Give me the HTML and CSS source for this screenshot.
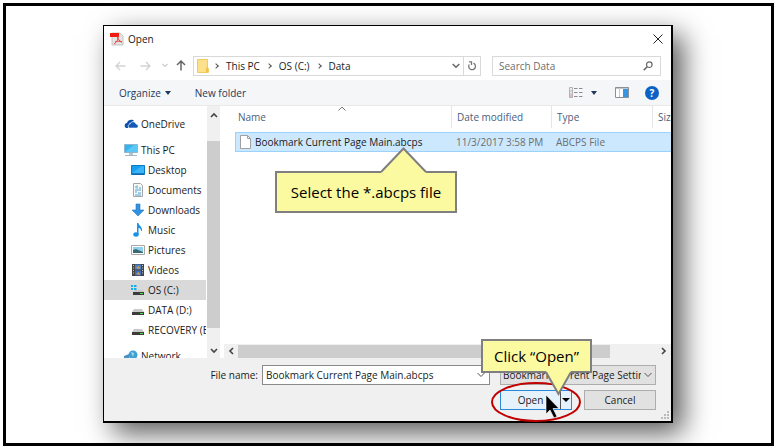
FILE: index.html
```html
<!DOCTYPE html>
<html lang="en">
<head>
    <meta charset="UTF-8">
    <meta name="viewport" content="width=device-width, initial-scale=1.0">
    <title>Open</title>
    <link rel="stylesheet" href="styles.css">
</head>
<body>
    <main class="slide">
        <div class="dialog">

            <header class="title-bar">
                <svg class="pdf-icon" width="14" height="14" viewBox="0 0 14 14">
                    <path d="M2 1h8l3 3v9H2z" fill="#e4e4e4" stroke="#c4c4c4"/>
                    <path d="M0 1h9v4H0z" fill="#ee1c0c"/>
                    <path d="M7 4c1 3 2 5 5 6M8 5c0 3-1 5-4 7M5 10c2-1 4-1 7 0" fill="none" stroke="#e8473c"/>
                </svg>
                <span class="title">Open</span>
                <button class="close" aria-label="Close">
                    <svg width="10" height="10" viewBox="0 0 10 10"><path d="M.5.5l9 9M9.500.5l-9 9" stroke="#222" stroke-width="1"/></svg>
                </button>
            </header>

            <nav class="address-row">
                <button class="nav-button" aria-label="Back">
                    <svg width="11" height="10" viewBox="0 0 11 10"><path d="M10.500 5H1M5 1L1 5l4 4" fill="none" stroke="#d2d2d2" stroke-width="1.300"/></svg>
                </button>
                <button class="nav-button" aria-label="Forward">
                    <svg width="11" height="10" viewBox="0 0 11 10"><path d="M.5 5H10M6 1l4 4-4 4" fill="none" stroke="#d2d2d2" stroke-width="1.300"/></svg>
                </button>
                <button class="nav-button small" aria-label="Recent locations">
                    <svg width="6" height="5" viewBox="0 0 6 5"><path d="M.5 1L3 3.500 5.500 1" fill="none" stroke="#ccc" stroke-width="1.200"/></svg>
                </button>
                <button class="nav-button up" aria-label="Up">
                    <svg width="10" height="11" viewBox="0 0 10 11"><path d="M5 10.500V1M1 5l4-4 4 4" fill="none" stroke="#666" stroke-width="1.500"/></svg>
                </button>
                <div class="path">
                    <svg class="folder" width="12" height="14" viewBox="0 0 12 14">
                        <path d="M.5.5h10v8l1 1v4H.5z" fill="#fde08a" stroke="#f0cb62"/>
                        <path d="M9 9l2-1v5H9z" fill="#efc04c"/>
                    </svg>
                    <span class="crumb-arrow"></span>
                    <a href="#">This PC</a>
                    <span class="crumb-arrow"></span>
                    <a href="#">OS (C:)</a>
                    <span class="crumb-arrow"></span>
                    <a href="#">Data</a>
                    <button class="path-drop" aria-label="Previous locations">
                        <svg width="8" height="6" viewBox="0 0 8 6"><path d="M.7 1L4 4.300 7.300 1" fill="none" stroke="#666" stroke-width="1.500"/></svg>
                    </button>
                    <button class="refresh" aria-label="Refresh">
                        <svg width="10" height="10" viewBox="0 0 10 10"><path d="M6.500 2.200A3.400 3.400 0 1 1 2.200 3.500M2 .8h2.500V4" fill="none" stroke="#777" stroke-width="1.300"/></svg>
                    </button>
                </div>
                <div class="search">
                    <input type="text" placeholder="Search Data" aria-label="Search Data">
                    <svg width="10" height="10" viewBox="0 0 10 10"><circle cx="6.300" cy="3.700" r="2.800" fill="none" stroke="#666" stroke-width="1.200"/><path d="M4.200 5.800L.7 9.300" stroke="#666" stroke-width="1.600"/></svg>
                </div>
            </nav>

            <div class="toolbar">
                <button class="tool">Organize <span class="down"></span></button>
                <button class="tool">New folder</button>
                <button class="view" aria-label="Change your view">
                    <svg width="14" height="11" viewBox="0 0 14 11">
                        <path d="M.5.5h3v10h-3zM.5 4h3M.5 7h3" fill="#eee" stroke="#b3b3b3"/>
                        <path d="M1 8h2v2H1z" fill="#f2b4ae"/>
                        <path d="M5 1.500h3.500M10 1.500h3.500M5 5.500h3.500M10 5.500h3.500M5 9.500h3.500M10 9.500h3.500" stroke="#8a8f96"/>
                    </svg>
                    <span class="down"></span>
                </button>
                <button class="preview" aria-label="Show the preview pane">
                    <svg width="14" height="11" viewBox="0 0 14 11">
                        <path d="M.5.5h13v10H.5z" fill="#fff" stroke="#8a8f96"/>
                        <path d="M.5 1h13" stroke="#8a8f96"/><path d="M4.500 1v9" stroke="#ccc"/>
                        <path d="M8 2h5v8H8z" fill="#3597e4"/>
                    </svg>
                </button>
                <button class="help" aria-label="Get help">?</button>
            </div>

            <div class="content">
                <div class="sidebar">
                    <ul class="tree">
                        <li class="root">
                            <svg width="14" height="14" viewBox="0 0 14 14"><path d="M1 10C0 7 2 6 3 6c1-4 6-4 7-2L6 6 4 9v2H2z" fill="#0b4fae"/><path d="M5 11C3 9 5 7 6 7c1-3 5-3 6 0 2 0 3 3 1 4z" fill="#1458b8" stroke="#fff" stroke-width=".6"/></svg>
                            OneDrive
                        </li>
                        <li class="root">
                            <svg width="14" height="14" viewBox="0 0 14 14"><path d="M.5 1.500h13v8H.5z" fill="#35b4ee" stroke="#8fb6cc"/><path d="M1 9l9-7h3v7z" fill="#5cc8f5"/><path d="M5 10h4v2H5z" fill="#b8c4cc"/><path d="M1 12.500h12" stroke="#a5b8c4"/></svg>
                            This PC
                        </li>
                        <li>
                            <svg width="14" height="14" viewBox="0 0 14 14"><path d="M.5 2.500h13v9H.5z" fill="#18a0f0" stroke="#0a7bc8"/><path d="M1 10l10-7h2v7z" fill="#3cb4f8"/><path d="M1 11h12" stroke="#0b5d9c"/></svg>
                            Desktop
                        </li>
                        <li>
                            <svg width="14" height="14" viewBox="0 0 14 14"><path d="M2.500.5h7l2 2v11h-9z" fill="#f7f7f7" stroke="#a5a5a5"/><path d="M4 4h3M8 5h2M4 7h6M4 9h2M7 10h3M4 12h6" stroke="#4aa3d6"/><path d="M6 2v4" stroke="#7cc"/></svg>
                            Documents
                        </li>
                        <li>
                            <svg width="14" height="14" viewBox="0 0 14 14"><path d="M5 1h4v6h4l-6 6-6-6h4z" fill="#3292e0" stroke="#2178c2" stroke-width=".6"/></svg>
                            Downloads
                        </li>
                        <li>
                            <svg width="14" height="14" viewBox="0 0 14 14"><path d="M6 0h1.500c0 3 4 3 3.500 8h-1c0-2-1-3-2.500-3v6.500H6z" fill="#1593e8"/><ellipse cx="5" cy="11.500" rx="2.700" ry="2.200" fill="#1593e8"/></svg>
                            Music
                        </li>
                        <li>
                            <svg width="14" height="14" viewBox="0 0 14 14"><path d="M.5 2.500h13v9H.5z" fill="#fff" stroke="#a8a8a8"/><path d="M2 4h10v6H2z" fill="#8fd0f0"/><path d="M2 7l3-1 7 3v1H2z" fill="#386b70"/></svg>
                            Pictures
                        </li>
                        <li>
                            <svg width="14" height="14" viewBox="0 0 14 14"><path d="M1 1h12v12H1z" fill="#444"/><path d="M4 1.500h6v5H4z" fill="#4a83d0"/><path d="M4 7.500h6v5H4z" fill="#3f6fc0"/><path d="M5 5l3-2 1 3zM5 11l3-2 1 3z" fill="#d9a23c"/><path d="M2.500 2v10M11.500 2v10" stroke="#ccc" stroke-dasharray="1 1.500"/></svg>
                            Videos
                        </li>
                        <li class="selected">
                            <svg width="14" height="14" viewBox="0 0 14 14"><path d="M0 2h2v2H0zM3 2h2.500v2H3zM0 5h2v2H0zM3 5h2.500v2H3z" fill="#17aee8"/><path d="M4 7h8l1 2H2z" fill="#c9c9c9"/><path d="M2 9h11v3H2z" fill="#3c3c3c"/><path d="M9 10.500h3" stroke="#4fdc4f"/></svg>
                            OS (C:)
                        </li>
                        <li>
                            <svg width="14" height="14" viewBox="0 0 14 14"><path d="M3 6h8l2 3H1z" fill="#c9c9c9"/><path d="M1 9h12v3H1z" fill="#3c3c3c"/><path d="M9 10.500h3" stroke="#4fdc4f"/></svg>
                            DATA (D:)
                        </li>
                        <li>
                            <svg width="14" height="14" viewBox="0 0 14 14"><path d="M3 6h8l2 3H1z" fill="#c9c9c9"/><path d="M1 9h12v3H1z" fill="#3c3c3c"/><path d="M9 10.500h3" stroke="#4fdc4f"/></svg>
                            RECOVERY (E:)
                        </li>
                        <li class="root">
                            <svg width="14" height="14" viewBox="0 0 14 14"><circle cx="9" cy="6" r="4.500" fill="#3fa0d4"/><path d="M0 7l5-2v6H0z" fill="#4a90c0"/><path d="M7 3l3 1-1 4z" fill="#a8daf0"/></svg>
                            Network
                        </li>
                    </ul>
                    <div class="v-scroll">
                        <svg width="8" height="6" viewBox="0 0 8 6"><path d="M1 5l3-3 3 3" fill="none" stroke="#444" stroke-width="1.600"/></svg>
                        <div class="v-thumb"></div>
                        <svg width="8" height="6" viewBox="0 0 8 6"><path d="M1 1l3 3 3-3" fill="none" stroke="#444" stroke-width="1.600"/></svg>
                    </div>
                </div>

                <div class="files">
                    <div class="list">
                        <table>
                            <thead>
                                <tr>
                                    <th>Name</th>
                                    <th class="date">Date modified</th>
                                    <th class="type">Type</th>
                                    <th class="size">Size</th>
                                </tr>
                            </thead>
                            <tbody>
                                <tr>
                                    <td class="file-name">
                                        <div class="file">
                                            <svg width="11" height="14" viewBox="0 0 11 14"><path d="M.5.5h7l3 3v10H.5z" fill="#fff" stroke="#a0a0a0"/><path d="M7.500.5v3h3" fill="none" stroke="#a0a0a0"/></svg>
                                            Bookmark Current Page Main.abcps
                                        </div>
                                    </td>
                                    <td>11/3/2017 3:58 PM</td>
                                    <td>ABCPS File</td>
                                    <td></td>
                                </tr>
                            </tbody>
                        </table>
                    </div>
                    <svg class="sort" width="8" height="5" viewBox="0 0 8 5"><path d="M.5 4.500L4 1l3.500 3.500" fill="none" stroke="#777"/></svg>
                    <div class="h-scroll">
                        <svg width="6" height="8" viewBox="0 0 6 8"><path d="M5 1L2 4l3 3" fill="none" stroke="#444" stroke-width="1.600"/></svg>
                        <div class="h-thumb"></div>
                        <svg width="6" height="8" viewBox="0 0 6 8"><path d="M1 1l3 3-3 3" fill="none" stroke="#444" stroke-width="1.600"/></svg>
                    </div>
                    <div class="callout select-callout">
                        Select the *.abcps file
                        <svg width="46" height="26" viewBox="0 0 46 26"><path d="M0 26v-1L22.500 1.500 45 25v1" fill="#fbfaa0"/><path d="M0 25L22.500 1.500 45 25" fill="none" stroke="#7f7f7f" stroke-width="2"/></svg>
                    </div>
                </div>
            </div>

            <footer class="footer">
                <label for="filename">File name:</label>
                <div class="combo">
                    <input id="filename" type="text" value="Bookmark Current Page Main.abcps">
                    <svg width="8" height="6" viewBox="0 0 8 6"><path d="M.5 1L4 4.500 7.500 1" fill="none" stroke="#555"/></svg>
                </div>
                <div class="actions">
                    <div class="filter">
                        <select aria-label="File type">
                            <option>Bookmark Current Page Settings</option>
                        </select>
                        <svg width="8" height="6" viewBox="0 0 8 6"><path d="M.5 1L4 4.500 7.500 1" fill="none" stroke="#555"/></svg>
                    </div>
                    <div class="split">
                        <button class="open">Open</button>
                        <button class="open-more" aria-label="More open options"><span class="down"></span></button>
                        <svg class="ring" width="92" height="42" viewBox="0 0 92 42"><ellipse cx="46" cy="21" rx="44" ry="19" fill="none" stroke="#c00000" stroke-width="2"/></svg>
                        <div class="callout open-callout">
                            Click “Open”
                            <svg width="28" height="26" viewBox="0 0 28 26"><path d="M1 0v1l12.500 22L26 1V0" fill="#fbfaa0"/><path d="M1 1l12.500 22L26 1" fill="none" stroke="#7f7f7f" stroke-width="2"/></svg>
                        </div>
                        <svg class="pointer" width="15" height="26" viewBox="0 0 15 26"><path d="M1 1v19l4-4 4 8 3-1.500-4-8h6z" fill="#000" stroke="#fff" stroke-width=".6"/></svg>
                    </div>
                    <button class="cancel">Cancel</button>
                </div>
                <svg class="grip" width="8" height="8" viewBox="0 0 8 8"><path d="M6 0h2v2H6zM3 3h2v2H3zM6 3h2v2H6zM0 6h2v2H0zM3 6h2v2H3zM6 6h2v2H6z" fill="#bbb"/></svg>
            </footer>
        </div>
    </main>
</body>
</html>
```
FILE: styles.css
```css
* {
    box-sizing: border-box;
}

body {
    margin: 0;
    padding: 3px 1px 2px 3px;
    min-height: 100vh;
    display: flex;
    background-color: #ffffff;
    font-family: "Open Sans", "Noto Sans", sans-serif;
    font-size: 10px;
    line-height: 14px;
    color: #1a1a1a;
}

button, input, select {
    font: inherit;
    color: inherit;
    margin: 0;
}

button {
    display: flex;
    align-items: center;
    justify-content: center;
    padding: 0;
    border: none;
    background: none;
}

svg {
    display: block;
    flex: none;
}

.slide {
    flex: 1;
    display: flex;
    min-width: 0;
    padding: 19px 98px 20px 97px;
    border: 3px solid #000000;
    overflow: hidden;
}

.dialog {
    flex: 1;
    min-width: 0;
    display: flex;
    flex-direction: column;
    border: 1px solid #000000;
    border-right-width: 2px;
    border-bottom-width: 2px;
    background-color: #ffffff;
    box-shadow: 10px 10px 26px rgba(0, 0, 0, 0.65);
}

/* title bar */
.title-bar {
    display: flex;
    align-items: center;
    gap: 4px;
    height: 25px;
    padding: 0 8px 0 6px;
}

.title {
    flex: 1;
}

/* address row */
.address-row {
    display: flex;
    align-items: center;
    height: 29px;
    padding: 4px 10px 4px 11px;
}

.nav-button {
    width: 11px;
    margin-right: 14px;
}

.nav-button.small {
    width: 6px;
    margin: 0 7px 0 -3px;
}

.nav-button.up {
    margin-right: 7px;
}

.path {
    flex: 1;
    display: flex;
    align-items: center;
    height: 20px;
    padding-left: 3px;
    border: 1px solid #d9d9d9;
}

.path a {
    color: inherit;
    text-decoration: none;
}

.crumb-arrow {
    width: 4px;
    height: 4px;
    margin: 0 8px 0 5px;
    border-top: 1px solid #555555;
    border-right: 1px solid #555555;
    transform: rotate(45deg);
}

.path a + .crumb-arrow {
    margin-left: 7px;
}

.path-drop {
    margin-left: auto;
    margin-right: 3px;
}

.refresh {
    width: 17px;
    align-self: stretch;
    border-left: 1px solid #d9d9d9;
}

.search {
    display: flex;
    align-items: center;
    width: 169px;
    height: 20px;
    margin-left: 11px;
    padding: 0 7px 0 6px;
    border: 1px solid #d9d9d9;
}

.search input {
    flex: 1;
    min-width: 0;
    padding: 0;
    border: none;
    outline: none;
}

.search input::placeholder {
    color: #6d6d6d;
    opacity: 1;
}

/* toolbar */
.toolbar {
    display: flex;
    align-items: center;
    height: 26px;
    padding: 0 12px 0 15px;
    background-color: #f5f6f7;
    border-bottom: 1px solid #e8e9ea;
    color: #1e395b;
}

.tool {
    margin-right: 24px;
}

.down {
    margin-left: 4px;
    border: 3px solid transparent;
    border-top: 4px solid #1e395b;
    border-bottom: none;
}

.view {
    margin-left: auto;
}

.view .down {
    margin-left: 8px;
}

.preview {
    margin: 0 16px 0 18px;
}

.help {
    width: 14px;
    height: 14px;
    border-radius: 50%;
    background-color: #0a63c4;
    color: #ffffff;
    font-weight: bold;
}

/* sidebar and file list */
.content {
    flex: 1;
    min-height: 0;
    display: flex;
}

.sidebar {
    display: flex;
    width: 117px;
}

.tree {
    flex: 1;
    min-width: 0;
    height: 252px;
    margin: 0 1px 0 0;
    padding: 7px 0 0;
    list-style: none;
    overflow: hidden;
}

.tree li {
    display: flex;
    align-items: center;
    gap: 3px;
    height: 20px;
    padding-left: 27px;
    white-space: nowrap;
}

.tree .root {
    height: 21px;
    padding-left: 20px;
}

.tree li + .root {
    margin-top: 5px;
}

.tree .selected {
    background-color: #d9d9d9;
}

.v-scroll {
    display: flex;
    flex-direction: column;
    align-items: center;
    width: 13px;
    margin-right: 1px;
    padding: 6px 0 4px;
    background-color: #f0f0f0;
}

.v-thumb {
    flex: 1;
    width: 100%;
    margin: 23px 0 20px;
    background-color: #cdcdcd;
}

.files {
    position: relative;
    flex: 1;
    min-width: 0;
    display: flex;
    flex-direction: column;
}

.list {
    flex: 1;
    padding-left: 14px;
    overflow: hidden;
}

table {
    width: 100%;
    table-layout: fixed;
    border-spacing: 0;
}

th, td {
    padding: 0 0 0 5px;
    text-align: left;
    white-space: nowrap;
    overflow: hidden;
}

th {
    height: 22px;
    border-left: 1px solid #e5e5e5;
    color: #4c607a;
    font-weight: normal;
}

th:first-child {
    padding-left: 3px;
    border-left: none;
}

.date {
    width: 100px;
}

.type {
    width: 101px;
}

.size {
    width: 19px;
}

tbody::before {
    content: "";
    display: block;
    height: 4px;
}

td {
    height: 20px;
    border-top: 1px solid #99d1ff;
    border-bottom: 1px solid #99d1ff;
    background-color: #cce8ff;
    color: #6d6d6d;
}

.file-name {
    padding-left: 4px;
    border-left: 1px solid #99d1ff;
    color: #1a1a1a;
}

.file {
    display: flex;
    align-items: center;
    gap: 4px;
}

.sort {
    position: absolute;
    top: 0;
    left: 117px;
}

.h-scroll {
    display: flex;
    align-items: center;
    height: 14px;
    margin-left: 3px;
    padding: 0 4px;
    background-color: #f0f0f0;
}

.h-thumb {
    width: 372px;
    height: 13px;
    margin: 0 auto 0 4px;
    background-color: #cdcdcd;
}

/* footer */
.footer {
    position: relative;
    display: flex;
    align-items: flex-start;
    height: 63px;
    padding: 7px 15px 0 0;
    background-color: #f0f0f0;
}

.footer label {
    width: 154px;
    margin-right: 4px;
    line-height: 20px;
    text-align: right;
}

.combo {
    flex: 1;
    min-width: 0;
    display: flex;
    align-items: center;
    height: 20px;
    margin-right: 10px;
    padding: 0 4px 0 3px;
    border: 1px solid #8a8a8a;
    background-color: #ffffff;
}

.combo input {
    flex: 1;
    min-width: 0;
    padding: 0;
    border: none;
    outline: none;
    background: none;
}

.actions {
    display: grid;
    grid-template-columns: 72px 72px;
    gap: 5px 12px;
}

.filter {
    position: relative;
    grid-column: span 2;
}

.filter select {
    display: block;
    appearance: none;
    width: 100%;
    height: 20px;
    padding: 0 14px 0 2px;
    border: 1px solid #adadad;
    border-radius: 0;
    background-color: #e1e1e1;
}

.filter svg {
    position: absolute;
    top: 7px;
    right: 4px;
}

.split {
    position: relative;
    display: flex;
    height: 20px;
    border: 1px solid #2b88d8;
    background-color: #e5f1fb;
}

.open {
    flex: 1;
}

.open-more {
    width: 11px;
    border-left: 1px solid #555555;
}

.open-more .down {
    margin: 0;
    border-width: 4px 4px 0;
    border-top-color: #000000;
}

.cancel {
    height: 20px;
    border: 1px solid #adadad;
    background-color: #e1e1e1;
}

.grip {
    position: absolute;
    right: 2px;
    bottom: 2px;
}

/* annotations drawn over the dialog */
.callout {
    position: absolute;
    display: flex;
    align-items: center;
    justify-content: center;
    border: 2px solid #7f7f7f;
    background-color: #fbfaa0;
    color: #000000;
    font-size: 15px;
    white-space: nowrap;
}

.callout svg {
    position: absolute;
}

.select-callout {
    top: 65px;
    left: 54px;
    width: 182px;
    height: 42px;
}

.select-callout svg {
    left: 104px;
    bottom: 38px;
}

.open-callout {
    right: -21px;
    bottom: 36px;
    width: 111px;
    height: 34px;
}

.open-callout svg {
    right: 17px;
    top: 30px;
}

.ring {
    position: absolute;
    top: -10px;
    left: -11px;
}

.pointer {
    position: absolute;
    top: 3px;
    left: 44px;
}
```
